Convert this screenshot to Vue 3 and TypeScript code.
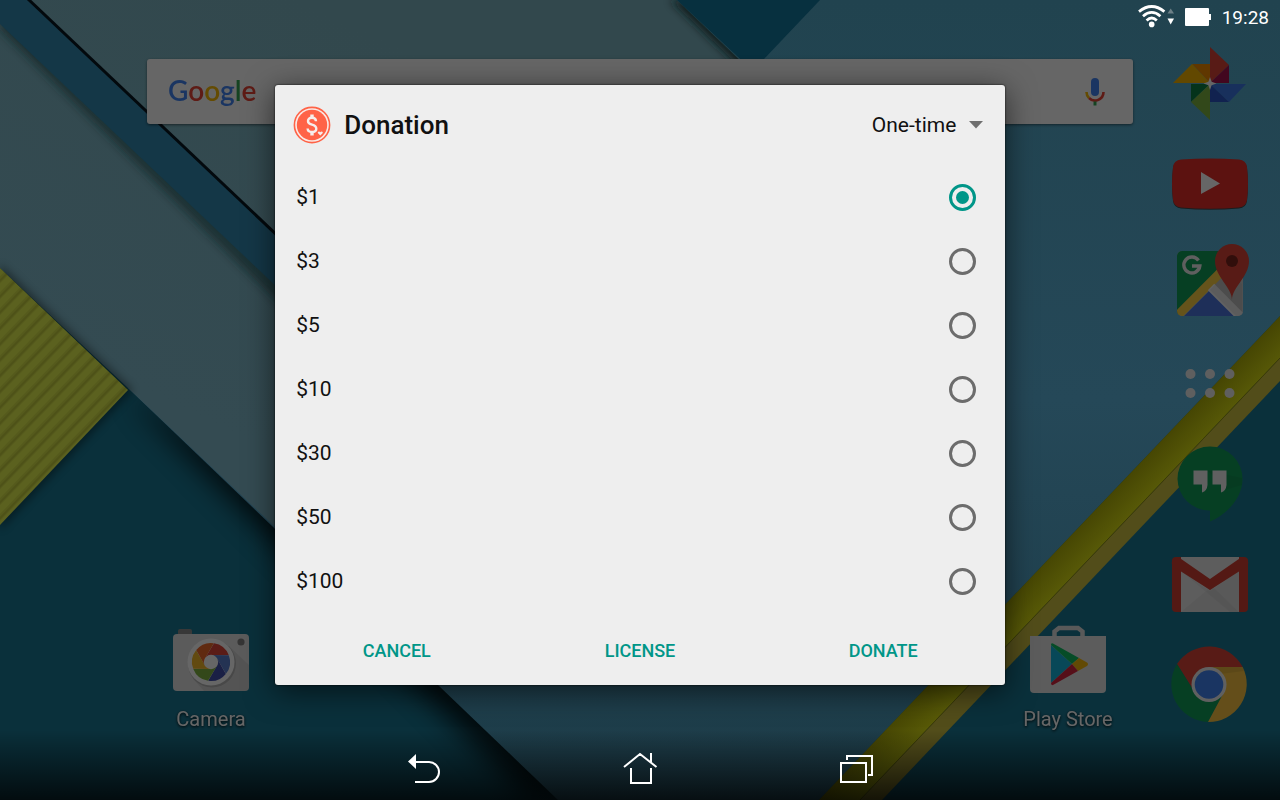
<script setup lang="ts">
import { ref } from 'vue'

interface Blade {
  color: string
  angle: number
}

const amounts: number[] = [1, 3, 5, 10, 30, 50, 100]
const selected = ref<number>(1)
const frequency = ref<string>('One-time')

const blades: Blade[] = [
  { color: '#e2453a', angle: 0 },
  { color: '#5a7fd0', angle: 60 },
  { color: '#4250ad', angle: 120 },
  { color: '#7fb542', angle: 180 },
  { color: '#f5b829', angle: 240 },
  { color: '#f06a29', angle: 300 },
]
</script>

<template>
  <div class="screen">
    <svg class="wallpaper" viewBox="0 0 1280 800" preserveAspectRatio="none" aria-hidden="true">
      <defs>
        <filter id="soft" x="-20%" y="-20%" width="140%" height="140%">
          <feGaussianBlur stdDeviation="14" />
        </filter>
        <filter id="tight" x="-20%" y="-20%" width="140%" height="140%">
          <feGaussianBlur stdDeviation="4" />
        </filter>
        <pattern id="ridges" width="11" height="11" patternUnits="userSpaceOnUse" patternTransform="rotate(-46)">
          <rect width="11" height="11" fill="#5b611f" />
          <rect y="5" width="11" height="5" fill="#555a1c" />
          <rect y="7" width="11" height="2" fill="#4e5218" />
        </pattern>
        <linearGradient id="band" gradientUnits="userSpaceOnUse" x1="1006" y1="600" x2="1032" y2="625">
          <stop offset="0" stop-color="#454503" />
          <stop offset="1" stop-color="#5a5c08" />
        </linearGradient>
        <linearGradient id="grey" gradientUnits="userSpaceOnUse" x1="300" y1="0" x2="120" y2="380">
          <stop offset="0" stop-color="#32484d" />
          <stop offset="1" stop-color="#344b52" />
        </linearGradient>
        <linearGradient id="sea" x1="0" y1="0" x2="0" y2="1">
          <stop offset="0" stop-color="#21434f" />
          <stop offset="0.5" stop-color="#254858" />
          <stop offset="1" stop-color="#1c3b47" />
        </linearGradient>
        <linearGradient id="fade" x1="0" y1="0" x2="0" y2="1">
          <stop offset="0" stop-color="#000" stop-opacity="0" />
          <stop offset="1" stop-color="#000" stop-opacity="0.75" />
        </linearGradient>
        <clipPath id="greyClip">
          <path d="M0 0H677L960 270L400 645L128 388L0 268Z" />
        </clipPath>
      </defs>
      <rect width="1280" height="800" fill="#0a303b" />
      <path d="M128 395L530 800H600L300 490Z" fill="#000" opacity="0.8" filter="url(#soft)" />
      <path d="M128 388L558 800H819L1280 316V0H600Z" fill="url(#sea)" />
      <path d="M0 0H677L960 270L400 645L128 388L0 268Z" fill="url(#grey)" />
      <g clip-path="url(#greyClip)">
        <path d="M670 0L741 68L800 130V0Z" fill="#0a1a1a" opacity="0.9" filter="url(#tight)" />
        <path d="M0 10L290 290V314L0 30Z" fill="#0d2020" opacity="0.6" filter="url(#tight)" />
      </g>
      <path d="M677 0L752 70L764 59L820 0Z" fill="#07303f" />
      <path d="M0 -28L300 257V309L0 24Z" fill="#143747" />
      <path d="M28 -1L300 257" stroke="#03090d" stroke-width="3" />
      <path d="M0 264L133 390L0 530Z" fill="#000" opacity="0.4" filter="url(#tight)" />
      <path d="M0 268L128 390L0 525Z" fill="url(#ridges)" />
      <path d="M1280 316L819 800H860L1280 358Z" fill="url(#band)" />
      <path d="M1280 358L860 800H882L1280 381Z" fill="#524d1a" />
      <path d="M1280 358L860 800" stroke="#3b3b08" />
      <rect y="730" width="1280" height="70" fill="url(#fade)" />
    </svg>

    <header class="status">
      <svg class="wifi" width="40" height="26" viewBox="0 0 40 26" role="img" aria-label="Wi-Fi">
        <g fill="none" stroke="#fff" stroke-width="2.8">
          <path d="M3 7.6Q15.7 -2.6 28.4 7.6" />
          <path d="M7 12.2Q15.7 4.6 24.4 12.2" />
          <path d="M10.6 16.4Q15.7 11.6 20.8 16.4" />
        </g>
        <circle cx="15.7" cy="20.4" r="2.8" fill="#fff" />
        <path d="M31.500 9.500L34.700 4.500L38 9.500Z" fill="#6d8087" />
        <path d="M31.500 14.500L34.700 20.500L38 14.500Z" fill="#fff" />
      </svg>
      <svg class="battery" width="27" height="18" viewBox="0 0 27 18" role="img" aria-label="Battery full">
        <path d="M1 0H23a1 1 0 0 1 1 1V6H26V12H24V17a1 1 0 0 1-1 1H1a1 1 0 0 1-1-1V1a1 1 0 0 1 1-1Z" fill="#fff" />
      </svg>
      <time>19:28</time>
    </header>

    <main class="home">
      <div class="desk">
        <form class="search" @submit.prevent>
          <span class="brand"><span class="b">G</span><span class="r">o</span><span class="y">o</span><span class="b">g</span><span class="g">l</span><span class="r">e</span></span>
          <input type="search" aria-label="Search" />
          <button type="button" aria-label="Voice search">
            <svg width="24" height="32" viewBox="0 0 24 32">
              <rect x="8" y="2" width="8" height="18" rx="4" fill="#4285f4" />
              <path d="M3.500 16a8.500 8.500 0 0 0 2.500 6" fill="none" stroke="#fbbc05" stroke-width="2.600" />
              <path d="M6 22A8.500 8.500 0 0 0 20.500 16" fill="none" stroke="#ea4335" stroke-width="2.600" />
              <path d="M12 25.500V29.500" stroke="#34a853" stroke-width="3" />
            </svg>
          </button>
        </form>
        <div class="shortcuts">
          <button type="button" class="app">
            <svg width="80" height="80" viewBox="0 0 80 80">
              <path d="M7 16V11a2 2 0 0 1 2-2H19a2 2 0 0 1 2 2V16Z" fill="#8c8c8c" />
              <rect x="2" y="14" width="76" height="57" rx="4" fill="#e4e4e4" />
              <path d="M58 26L78 45V67a4 4 0 0 1-4 4H33L22 59Z" fill="#000" opacity="0.07" />
              <circle cx="70" cy="22" r="3.600" fill="#858585" />
              <circle cx="41" cy="43.500" r="24" fill="#b5b5b5" />
              <circle cx="40" cy="42" r="23.500" fill="#fff" />
              <g transform="translate(40 42)">
                <path
                  v-for="blade in blades"
                  :key="blade.angle"
                  d="M3 -18.800A19 19 0 0 1 17.700 -7L0 -7L-6.100 -3.500Z"
                  :fill="blade.color"
                  :transform="`rotate(${blade.angle})`"
                />
                <circle r="7.200" fill="#fff" />
              </g>
            </svg>
            <span>Camera</span>
          </button>
          <button type="button" class="app">
            <svg width="80" height="80" viewBox="0 0 80 80">
              <path d="M26.500 17V11.500L31 8H50L54.500 11.500V17" fill="none" stroke="#dedede" stroke-width="4.500" />
              <path d="M2 16H78V69a4 4 0 0 1-4 4H6a4 4 0 0 1-4-4Z" fill="#e6e6e6" />
              <path d="M23 25V63L44 44Z" fill="#13b4dc" />
              <path d="M23 25Q23 22.500 25 23.500L51 38L44 44Z" fill="#0fbf62" />
              <path d="M51 38L59 42.500Q61 44 59 46L50 51L44 44Z" fill="#f6b90c" />
              <path d="M23 63Q23 66 25.500 64.800L50 51L44 44Z" fill="#d8263f" />
            </svg>
            <span>Play Store</span>
          </button>
        </div>
      </div>

      <nav class="dock" aria-label="Favourites">
        <button type="button" aria-label="Photos">
          <svg width="80" height="80" viewBox="0 0 80 80">
            <path d="M40 3L59 21L40 39Z" fill="#db4437" />
            <path d="M59 21V39H40Z" fill="#a5114d" />
            <path d="M22 20H40V39Z" fill="#f08a00" />
            <path d="M22 20L40 39H3Z" fill="#f4b400" />
            <path d="M40 40H76L59 58Z" fill="#3b78e7" />
            <path d="M40 40L59 58H40Z" fill="#2a56c6" />
            <path d="M21 40H40L21 58Z" fill="#0b8043" />
            <path d="M21 58L40 40V76Z" fill="#7cb342" />
            <path d="M40 33L41.600 37.800L46.500 39.500L41.600 41.200L40 46L38.400 41.200L33.500 39.500L38.400 37.800Z" fill="#fff" />
          </svg>
        </button>
        <button type="button" aria-label="YouTube">
          <svg width="80" height="80" viewBox="0 0 80 80">
            <path d="M11 16.500Q40 14.500 69 16.500Q76 17 77 24Q79 41 77 57Q76 64 69 64.500Q40 67 11 64.500Q4 64 3 57Q1 41 3 24Q4 17 11 16.500Z" fill="#3a4a50" />
            <path d="M11 15.500Q40 13.500 69 15.500Q76 16 77 23Q79 40 77 56Q76 63 69 63.500Q40 66 11 63.500Q4 63 3 56Q1 40 3 23Q4 16 11 15.500Z" fill="#e52d27" />
            <path d="M31 28V50L50 39.500Z" fill="#fff" />
          </svg>
        </button>
        <button type="button" aria-label="Maps">
          <svg width="80" height="80" viewBox="0 0 80 80">
            <clipPath id="mapTile"><rect x="7" y="7" width="66" height="65" rx="5" /></clipPath>
            <g clip-path="url(#mapTile)">
              <rect x="7" y="7" width="66" height="65" fill="#c9c9c9" />
              <path d="M7 7H60V20L7 72Z" fill="#0f9d58" />
              <path d="M40 46L66 72H14Z" fill="#4a76de" />
              <path d="M4 75L56 23" stroke="#fdd043" stroke-width="9" />
              <path d="M41 43L72 74" stroke="#f4f4f4" stroke-width="9" />
              <path d="M62 28L52 33L40 46L72 78V40Z" fill="#000" opacity="0.06" />
            </g>
            <path d="M28.500 16.500A8 8 0 1 0 29.800 22H22" fill="none" stroke="#eee" stroke-width="3.400" />
            <path d="M62 56C62 43 45 33 45 17A17 17 0 0 1 79 17C79 33 62 43 62 56Z" fill="#db4437" />
            <circle cx="62" cy="17" r="6" fill="#7a231b" />
          </svg>
        </button>
        <button type="button" aria-label="All apps">
          <svg width="80" height="80" viewBox="0 0 80 80" fill="#eee">
            <circle cx="20.500" cy="30" r="5" />
            <circle cx="40" cy="30" r="5" />
            <circle cx="59.500" cy="30" r="5" />
            <circle cx="20.500" cy="49" r="5" />
            <circle cx="40" cy="49" r="5" />
            <circle cx="59.500" cy="49" r="5" />
          </svg>
        </button>
        <button type="button" aria-label="Hangouts">
          <svg width="80" height="80" viewBox="0 0 80 80">
            <path d="M40 1.500A32.500 32.500 0 0 0 7.500 34A32 32 0 0 0 40 65.500V76.500C58 69 72.500 52 72.500 34A32.500 32.500 0 0 0 40 1.500Z" fill="#0f9d58" />
            <path d="M37.500 25.500L56.500 44.500L72 40V33Z" fill="#000" opacity="0.06" />
            <path d="M23.500 25.500H37.500V40Q37 46 32 47.500V39.500H23.500Z" fill="#f1f1f1" />
            <path d="M42.500 25.500H56.500V40Q56 46 51 47.500V39.500H42.500Z" fill="#f1f1f1" />
          </svg>
        </button>
        <button type="button" aria-label="Gmail">
          <svg width="80" height="80" viewBox="0 0 80 80">
            <rect x="2" y="12" width="76" height="55" rx="4" fill="#d23f31" />
            <path d="M11 12H69V67H11Z" fill="#e8e8e8" />
            <path d="M11 67L42 41L69 67Z" fill="#000" opacity="0.04" />
            <path d="M11 26L40 46L69 26V67H60Z" fill="#000" opacity="0.04" />
            <path d="M3 14Q5 12 9 12.500L40 34L71 12.500Q75 12 77 14Q80 19 76 22L40 45L4 22Q0 19 3 14Z" fill="#d23f31" />
          </svg>
        </button>
        <button type="button" aria-label="Chrome">
          <svg width="80" height="80" viewBox="0 0 80 80">
            <path d="M7 19A38 38 0 0 1 72.700 22H39L22 43Z" fill="#db4437" />
            <path d="M7 19A38 38 0 0 0 38 77L53 49L39 39L22 43Z" fill="#0f9d58" />
            <path d="M72.700 22A38 38 0 0 1 38 77L53 49L45 39L39 22Z" fill="#f9c440" />
            <path d="M39 22H72.700L74 26L50 29Z" fill="#000" opacity="0.08" />
            <circle cx="39" cy="39.500" r="17.500" fill="#f1f1f1" />
            <circle cx="39" cy="39.500" r="14.300" fill="#4285f4" />
          </svg>
        </button>
      </nav>
    </main>

    <nav class="keys" aria-label="System">
      <button type="button" aria-label="Back">
        <svg width="40" height="40" viewBox="0 0 40 40">
          <path d="M4 13.500L12 6V21Z" fill="#fff" />
          <path d="M11 14H25a10 10 0 0 1 0 20H11" fill="none" stroke="#fff" stroke-width="2" />
        </svg>
      </button>
      <button type="button" aria-label="Home">
        <svg width="40" height="40" viewBox="0 0 40 40" fill="none" stroke="#fff" stroke-width="2">
          <path d="M4 19L20 6L36.500 19M31 5V14M11 20V35H31V20" />
        </svg>
      </button>
      <button type="button" aria-label="Recent apps">
        <svg width="40" height="40" viewBox="0 0 40 40" fill="none" stroke="#fff" stroke-width="2">
          <path d="M5 15H30V34H5ZM11 12V8H36V27H32" />
        </svg>
      </button>
    </nav>

    <div class="modal">
      <form class="dialog" role="dialog" aria-labelledby="dialog-title" @submit.prevent>
        <header class="head">
          <svg width="38" height="38" viewBox="0 0 38 38" aria-hidden="true">
            <circle cx="19" cy="19" r="17.600" fill="#fbe9e5" stroke="#ff6347" stroke-width="1.600" />
            <circle cx="19" cy="19" r="15.200" fill="#ff6347" />
            <path d="M23 15.200Q22.800 11.800 19 11.800Q15 11.800 15 15Q15 17.700 19 18.700Q23.300 19.800 23.300 22.800Q23.300 26 19 26Q14.800 26 14.600 22.500" fill="none" stroke="#f6eeec" stroke-width="2.400" />
            <path d="M19 8.500V12M19 26V29.500" stroke="#f6eeec" stroke-width="3.400" />
            <path d="M27.300 29.500L24.800 27Q24.500 25.500 25.900 25.500Q26.800 25.500 27.300 26.300Q27.800 25.500 28.700 25.500Q30.100 25.500 29.800 27Z" fill="#f6eeec" />
          </svg>
          <h1 id="dialog-title">Donation</h1>
          <span class="picker">
            <select v-model="frequency" aria-label="Frequency">
              <option>One-time</option>
              <option>Monthly</option>
            </select>
            <svg width="14" height="8" viewBox="0 0 14 8" aria-hidden="true"><path d="M0 0H14L7 7.500Z" fill="#6f6f6f" /></svg>
          </span>
        </header>
        <div class="amounts" role="radiogroup" aria-labelledby="dialog-title">
          <label v-for="amount in amounts" :key="amount" class="amount">
            <span>${{ amount }}</span>
            <input v-model="selected" type="radio" name="amount" :value="amount" />
          </label>
        </div>
        <footer class="actions">
          <button type="button">CANCEL</button>
          <button type="button">LICENSE</button>
          <button type="submit">DONATE</button>
        </footer>
      </form>
    </div>
  </div>
</template>

<style>
body {
  background: #0a303b;
}
</style>

<style scoped>
.screen {
  position: relative;
  display: flex;
  flex-direction: column;
  min-height: 100vh;
  overflow: hidden;
  font-family: Roboto, "Liberation Sans", sans-serif;
  color: #fff;
}
.screen * {
  box-sizing: border-box;
}
button {
  padding: 0;
  border: 0;
  background: none;
  color: inherit;
  font: inherit;
  cursor: pointer;
}
svg {
  display: block;
}
.wallpaper {
  position: absolute;
  inset: 0;
  width: 100%;
  height: 100%;
}
.status {
  position: relative;
  display: flex;
  align-items: center;
  justify-content: flex-end;
  height: 34px;
  padding-right: 11px;
  font-size: 19px;
}
.battery {
  margin: 0 10px 0 9px;
}
.home {
  position: relative;
  flex: 1;
  display: flex;
  filter: brightness(0.4);
}
.desk {
  flex: 1;
  display: flex;
  flex-direction: column;
  justify-content: space-between;
}
.search {
  display: flex;
  align-items: center;
  height: 65px;
  margin: 25px 7px 0 147px;
  padding: 0 26px 0 21px;
  border-radius: 3px;
  background: #fff;
  box-shadow: 0 1px 3px rgba(0, 0, 0, 0.5);
}
.search input {
  flex: 1;
  min-width: 0;
  border: 0;
  outline: 0;
  background: none;
  font: inherit;
}
.brand {
  padding-bottom: 4px;
  font-family: Lato, sans-serif;
  font-size: 28px;
  font-weight: 600;
}
.b { color: #4285f4; }
.r { color: #ea4335; }
.y { color: #fbbc05; }
.g { color: #34a853; }
.shortcuts {
  display: flex;
  justify-content: space-between;
  padding: 0 12px 0 151px;
}
.app {
  display: flex;
  flex-direction: column;
  align-items: center;
  gap: 3px;
  width: 120px;
  font-size: 20px;
  line-height: 32px;
  text-shadow: 0 1px 3px #000;
}
.dock {
  display: grid;
  grid-template-rows: repeat(7, 1fr);
  justify-items: center;
  align-items: center;
  width: 140px;
}
.keys {
  position: relative;
  display: flex;
  justify-content: center;
  gap: 152px;
  height: 65px;
}
.keys button {
  display: grid;
  place-items: center;
  width: 64px;
}
.modal {
  position: absolute;
  inset: 0;
  display: flex;
  align-items: center;
  justify-content: center;
  padding-bottom: 30px;
}
.dialog {
  width: 57%;
  border-radius: 3px;
  background: #eee;
  color: #111;
  box-shadow: 0 0 2px #000, 0 6px 30px rgba(0, 0, 0, 0.6);
}
.head {
  display: flex;
  align-items: center;
  height: 80px;
  padding: 0 22px 0 18px;
}
.head h1 {
  flex: 1;
  margin: 0 0 0 13px;
  font-size: 26px;
  font-weight: 500;
}
.picker {
  display: flex;
  align-items: center;
  gap: 12px;
}
.picker select {
  appearance: none;
  padding: 0;
  border: 0;
  background: none;
  color: inherit;
  font: inherit;
  font-size: 21px;
}
.amount {
  display: flex;
  align-items: center;
  justify-content: space-between;
  height: 64px;
  padding: 0 29px 0 21px;
  font-size: 21px;
}
.amount input {
  appearance: none;
  display: grid;
  place-items: center;
  width: 27px;
  height: 27px;
  margin: 0;
  border: 3px solid #6c6c6c;
  border-radius: 50%;
}
.amount input:checked {
  border-color: #009688;
}
.amount input:checked::before {
  content: "";
  width: 13px;
  height: 13px;
  border-radius: 50%;
  background: #009688;
}
.actions {
  display: grid;
  grid-template-columns: repeat(3, 1fr);
  height: 72px;
  padding-top: 2px;
  color: #009688;
  font-size: 18px;
  font-weight: 500;
}
</style>
